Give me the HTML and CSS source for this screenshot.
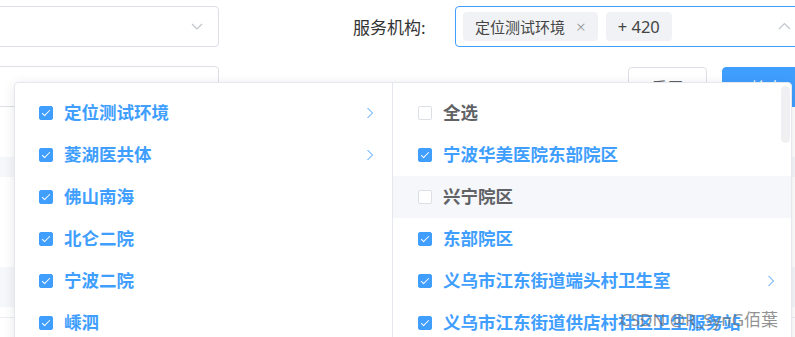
FILE: index.html
```html
<!doctype html>
<html lang=zh>
  <head>
    <meta charset=utf-8 />
    <title>服务机构</title>
    <link rel="stylesheet" href="styles.css">
  </head>
  <body>
    <div class="page">
      <div class="filters">
        <div class="filter-row">
          <div class="select select-first">
            <svg class="select-arrow" width="12" height="7" viewBox="0 0 12 7"><path d="M1 1l5 5 5-5" fill="none" stroke="#c0c4cc" stroke-width="1.2"/></svg>
          </div>
          <label class="field-label">服务机构:</label>
          <div class="select select-org">
            <span class="tag">定位测试环境<span class="tag-close">×</span></span>
            <span class="tag tag-count">+ 420</span>
            <svg class="select-arrow select-arrow-up" width="13" height="8" viewBox="0 0 13 8"><path d="M1 7l5.5-5.5 5.5 5.5" fill="none" stroke="#c0c4cc" stroke-width="1.2"/></svg>
          </div>
        </div>
        <div class="filter-row filter-row-second">
          <div class="input"></div>
          <button class="btn">重置</button>
          <button class="btn btn-primary">检索</button>
        </div>
      </div>

      <div class="table-bg">
        <div class="band band-head"></div>
        <div class="band band-row"></div>
        <div class="table-line"></div>
      </div>

      <!-- cascader dropdown lies over the form -->
      <div class="cascader-panel">
        <ul class="menu menu-left">
          <li class="node is-checked"><span class="checkbox"></span><span class="label">定位测试环境</span><svg class="node-arrow" width="8" height="12" viewBox="0 0 8 12"><path d="M1.5 1l5 5-5 5" fill="none" stroke="#409eff" stroke-width="1"/></svg></li>
          <li class="node is-checked"><span class="checkbox"></span><span class="label">菱湖医共体</span><svg class="node-arrow" width="8" height="12" viewBox="0 0 8 12"><path d="M1.5 1l5 5-5 5" fill="none" stroke="#409eff" stroke-width="1"/></svg></li>
          <li class="node is-checked"><span class="checkbox"></span><span class="label">佛山南海</span></li>
          <li class="node is-checked"><span class="checkbox"></span><span class="label">北仑二院</span></li>
          <li class="node is-checked"><span class="checkbox"></span><span class="label">宁波二院</span></li>
          <li class="node is-checked"><span class="checkbox"></span><span class="label">嵊泗</span></li>
        </ul>
        <ul class="menu menu-right">
          <li class="node"><span class="checkbox"></span><span class="label">全选</span></li>
          <li class="node is-checked"><span class="checkbox"></span><span class="label">宁波华美医院东部院区</span></li>
          <li class="node is-hover"><span class="checkbox"></span><span class="label">兴宁院区</span></li>
          <li class="node is-checked"><span class="checkbox"></span><span class="label">东部院区</span></li>
          <li class="node is-checked"><span class="checkbox"></span><span class="label">义乌市江东街道端头村卫生室</span><svg class="node-arrow" width="8" height="12" viewBox="0 0 8 12"><path d="M1.5 1l5 5-5 5" fill="none" stroke="#409eff" stroke-width="1"/></svg></li>
          <li class="node is-checked"><span class="checkbox"></span><span class="label">义乌市江东街道供店村社区卫生服务站</span></li>
          <span class="scroll-thumb"></span>
        </ul>
      </div>

      <div class="watermark">CSDN @R_SynG佰葉</div>
    </div>
  </body>
</html>
```

FILE: styles.css
```css
body {
  background: #fff;
  margin: 0;
  padding: 0;
  overflow: hidden;
  font-family: 'Noto Sans', 'Noto Sans CJK SC', sans-serif;
}

.page {
  position: relative;
  height: 337px;
  overflow: hidden;
}

.filters {
  padding-top: 6px;
}

.filter-row {
  display: flex;
  align-items: center;
}

.filter-row-second {
  margin-top: 19px;
  align-items: flex-start;
}

.select {
  box-sizing: border-box;
  height: 41px;
  border: 1px solid #dcdfe6;
  border-radius: 4px;
  display: flex;
  align-items: center;
  position: relative;
  flex-shrink: 0;
}

.select-first {
  margin-left: -20px;
  width: 239px;
  justify-content: flex-end;
  padding-right: 15px;
}

.field-label {
  width: 102px;
  margin-left: 134px;
  font-size: 17px;
  color: #333;
  flex-shrink: 0;
}

.select-org {
  width: 345px;
  border-color: #409eff;
  padding: 0 8px 0 7px;
  gap: 8px;
}

.select-arrow-up {
  margin-left: auto;
  margin-top: -2px;
}

.tag {
  display: inline-flex;
  align-items: center;
  height: 29px;
  padding: 0 12px;
  background: #f0f2f5;
  border-radius: 4px;
  font-size: 15px;
  color: #444;
}

.tag-count {
  font-size: 16.5px;
}

.tag-close {
  color: #909399;
  font-size: 17px;
  margin-left: 11px;
  font-weight: 300;
}

.input {
  box-sizing: border-box;
  margin-left: -20px;
  width: 239px;
  height: 41px;
  border: 1px solid #dcdfe6;
  border-radius: 4px;
  flex-shrink: 0;
}

.btn {
  box-sizing: border-box;
  flex-shrink: 0;
  height: 40px;
  margin-top: 1px;
  border: 1px solid #dcdfe6;
  border-radius: 4px;
  background: #fff;
  color: #606266;
  font-family: 'Noto Sans CJK SC', sans-serif;
  font-size: 16px;
  padding: 0;
  width: 79px;
  margin-left: 409px;
}

.btn-primary {
  background: #409eff;
  border-color: #409eff;
  color: #fff;
  margin-left: 15px;
  width: 90px;
}

.table-bg {
  padding-top: 50px;
}

.band {
  background: #f5f7fa;
}

.band-head {
  height: 20px;
}

.band-row {
  height: 40px;
  margin-top: 90px;
}

.table-line {
  height: 1px;
  margin-top: 10px;
  background: #ebeef5;
}

.cascader-panel {
  position: absolute;
  left: 14px;
  top: 82px;
  width: 778px;
  height: 280px;
  box-sizing: border-box;
  background: #fff;
  border: 1px solid #e4e7ed;
  border-radius: 4px;
  box-shadow: 0 2px 12px 0 rgba(0, 0, 0, 0.1);
  display: flex;
}

.menu {
  list-style: none;
  margin: 0;
  padding: 9px 0 0;
  position: relative;
}

.menu-left {
  width: 377px;
  border-right: 1px solid #e4e7ed;
}

.menu-right {
  flex: 1;
}

.node {
  height: 42px;
  display: flex;
  align-items: center;
  padding: 0 18px 0 24px;
  font-size: 17.5px;
  font-weight: bold;
  color: #606266;
  white-space: nowrap;
}

.menu-right .node {
  padding: 0 16px 0 25px;
}

.node.is-checked {
  color: #409eff;
}

.node.is-hover {
  background: #f5f7fa;
}

.label {
  margin-left: 11px;
  line-height: 1;
}

.node-arrow {
  margin-left: auto;
}

.checkbox {
  box-sizing: border-box;
  width: 14px;
  height: 14px;
  border: 1px solid #dcdfe6;
  border-radius: 2px;
  background: #fff;
  position: relative;
  flex-shrink: 0;
}

.is-checked .checkbox {
  background: #409eff;
  border-color: #409eff;
}

.is-checked .checkbox::after {
  content: '';
  position: absolute;
  left: 4px;
  top: 1px;
  width: 3px;
  height: 7px;
  border: 1px solid #fff;
  border-left: 0;
  border-top: 0;
  transform: rotate(45deg);
}

.scroll-thumb {
  position: absolute;
  right: 1px;
  top: 3px;
  width: 9px;
  height: 57px;
  border-radius: 5px;
  background: #f0f0f2;
}

.watermark {
  position: absolute;
  left: 620px;
  top: 306px;
  font-size: 17px;
  color: rgba(110, 110, 110, 0.75);
  white-space: nowrap;
}
```
